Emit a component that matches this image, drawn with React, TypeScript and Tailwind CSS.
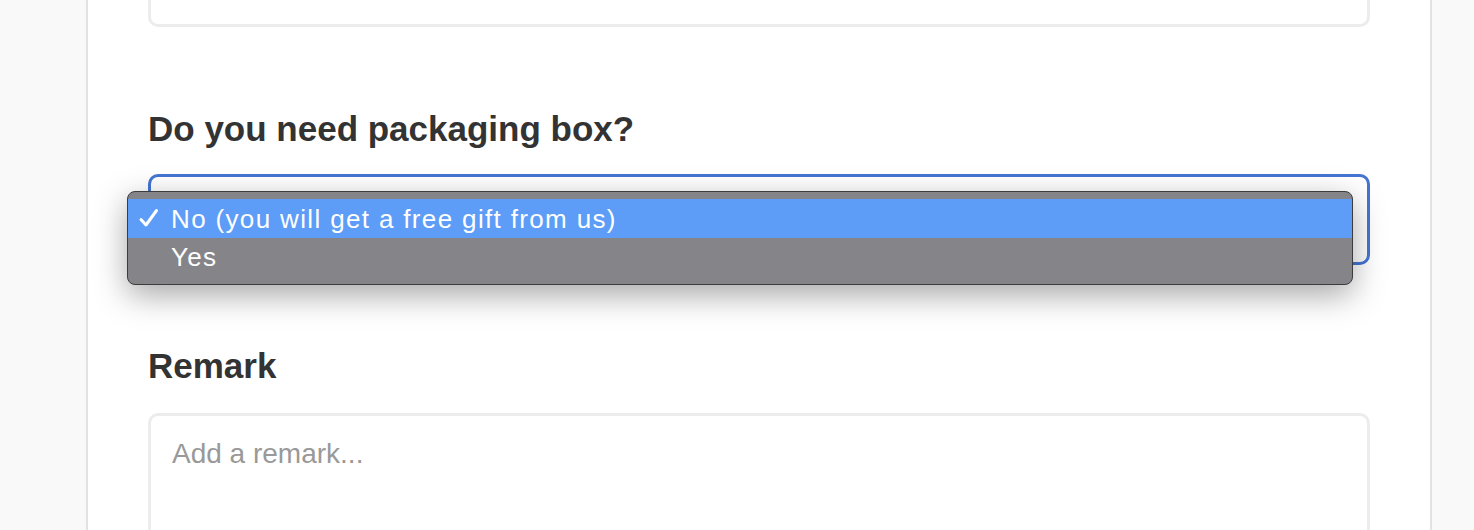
export default function App() {
  return (
    <div className="flex h-[530px] overflow-hidden bg-[#f9f9f9] font-['Liberation_Sans',Arial,sans-serif]">
      <div className="ml-[86px] w-[1346px] shrink-0 border-x-2 border-[#e2e2e2] bg-white px-[60px]">
        {/* bottom part of the field above */}
        <div className="h-[27px] rounded-b-[10px] border-[3px] border-t-0 border-[#ececec]" />

        <h3 className="mt-[82px] text-[35px] leading-[40px] font-bold text-[#333]">
          Do you need packaging box?
        </h3>

        <div className="relative mt-[25px] h-[91px] rounded-[10px] border-[3px] border-[#4475d3] bg-white">
          <div className="absolute left-[-24px] top-[14px] w-[1226px] rounded-[8px] border border-[#3c3c3e] bg-[#858589] pt-[7px] pb-[8px] text-[26px] leading-[38px] tracking-[1.35px] text-white shadow-[0_10px_32px_rgba(0,0,0,0.35)]">
            <div className="flex h-[39px] items-center bg-[#5d9cf7]">
              <svg width="43" height="39" viewBox="0 0 43 39" className="shrink-0">
                <path
                  d="M13 20.5 L18 26 L28.5 11.5"
                  fill="none"
                  stroke="white"
                  strokeWidth="3"
                  strokeLinecap="round"
                  strokeLinejoin="round"
                />
              </svg>
              <span>No (you will get a free gift from us)</span>
            </div>
            <div className="flex h-[38px] items-center pl-[43px]">
              <span>Yes</span>
            </div>
          </div>
        </div>

        <h3 className="mt-[81px] text-[35px] leading-[40px] font-bold text-[#333]">Remark</h3>

        <div className="mt-[27px] h-[200px] rounded-[10px] border-[3px] border-[#ececec] px-[21px] pt-[22px]">
          <p className="text-[28px] leading-[32px] text-[#999]">Add a remark...</p>
        </div>
      </div>
    </div>
  );
}
